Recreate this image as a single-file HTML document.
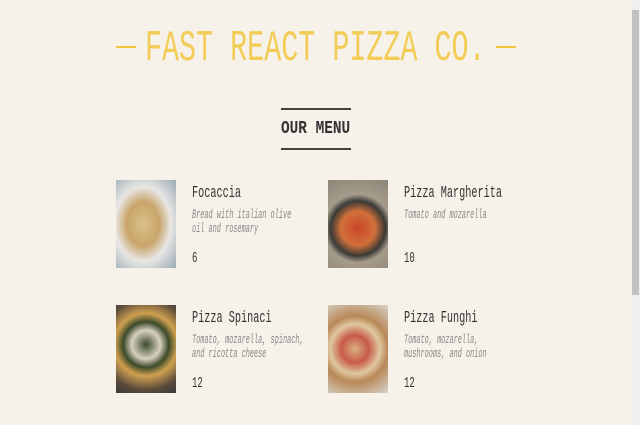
<!DOCTYPE html>
<html><head><style>
html,body{margin:0;padding:0;}
body{width:640px;height:425px;background:#f6f1e9;position:relative;overflow:hidden;font-family:"Liberation Mono",monospace;}
.t{position:absolute;white-space:nowrap;transform-origin:0 0;transform:scaleX(0.6);}
.d{transform:scaleX(0.53);}
.line{position:absolute;height:2px;}
.img{position:absolute;width:60px;height:88px;}
.sb{position:absolute;left:631px;top:0;width:9px;height:425px;background:#efefef;}
.th{position:absolute;left:632px;top:10px;width:7px;height:285px;background:#c1c1c1;}
</style></head><body>
<div class="line" style="left:116px;top:46px;width:20px;background:#f0c63e"></div>
<div class="line" style="left:496px;top:46px;width:20px;background:#f0c63e"></div>
<div class="t" style="left:145px;top:24px;font-size:44px;line-height:50px;color:#f2cc55;transform:scaleX(0.645)">FAST REACT PIZZA CO.</div>
<div class="line" style="left:281px;top:108px;width:70px;background:#444"></div>
<div class="line" style="left:281px;top:148px;width:70px;background:#444"></div>
<div class="t" style="left:281px;top:119px;font-size:18px;line-height:20px;font-weight:bold;color:#333;transform:scaleX(0.8)">OUR MENU</div>

<div class="img" style="left:116px;top:180px;background:radial-gradient(ellipse at 45% 50%,#d9c08a 0,#c9a56a 35%,#e8e6e4 60%,#9aa9b3 100%)"></div>
<div class="img" style="left:328px;top:180px;background:radial-gradient(circle at 50% 55%,#c8462a 0,#d2703a 30%,#3a3a36 48%,#a69c8c 60%,#8c8478 100%)"></div>
<div class="img" style="left:116px;top:305px;background:radial-gradient(circle at 50% 45%,#3a4a2c 0,#d8d0c0 25%,#3c4a2a 40%,#d0a050 55%,#5a4a3a 80%,#3a3a3a 100%)"></div>
<div class="img" style="left:328px;top:305px;background:radial-gradient(circle at 45% 50%,#d8b080 0,#c85a48 25%,#e0c8a0 45%,#b88858 60%,#d8d4cc 100%)"></div>

<div class="t" style="left:192px;top:184px;font-size:17px;line-height:20px;color:#333">Focaccia</div>
<div class="t d" style="left:192px;top:208px;font-size:13px;line-height:14px;color:#888;font-style:italic">Bread with italian olive<br>oil and rosemary</div>
<div class="t" style="left:192px;top:250px;font-size:15px;color:#333">6</div>

<div class="t" style="left:404px;top:184px;font-size:17px;line-height:20px;color:#333">Pizza Margherita</div>
<div class="t d" style="left:404px;top:208px;font-size:13px;line-height:14px;color:#888;font-style:italic">Tomato and mozarella</div>
<div class="t" style="left:404px;top:250px;font-size:15px;color:#333">10</div>

<div class="t" style="left:192px;top:309px;font-size:17px;line-height:20px;color:#333">Pizza Spinaci</div>
<div class="t d" style="left:192px;top:333px;font-size:13px;line-height:14px;color:#888;font-style:italic">Tomato, mozarella, spinach,<br>and ricotta cheese</div>
<div class="t" style="left:192px;top:375px;font-size:15px;color:#333">12</div>

<div class="t" style="left:404px;top:309px;font-size:17px;line-height:20px;color:#333">Pizza Funghi</div>
<div class="t d" style="left:404px;top:333px;font-size:13px;line-height:14px;color:#888;font-style:italic">Tomato, mozarella,<br>mushrooms, and onion</div>
<div class="t" style="left:404px;top:375px;font-size:15px;color:#333">12</div>

<div class="sb"></div><div class="th"></div>
</body></html>
